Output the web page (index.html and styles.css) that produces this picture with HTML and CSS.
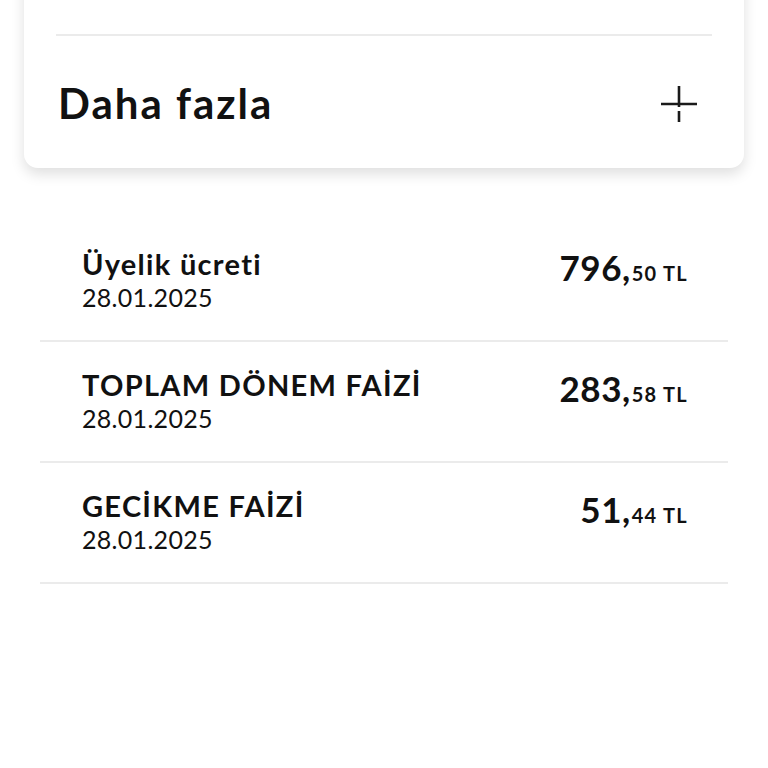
FILE: index.html
```html
<!DOCTYPE html>
<html lang="tr">
    <head>
        <meta charset="UTF-8">
        <meta name="viewport" content="width=device-width, initial-scale=1.0">
        <title>Hesap hareketleri</title>
        <link rel="stylesheet" href="styles.css">
    </head>
    <body>
        <div class="card">
            <div class="card-top"></div>
            <div class="more">
                <span class="more-label">Daha fazla</span>
                <svg class="plus" width="38" height="38" viewBox="0 0 38 38">
                    <path d="M1 19 H37" stroke="#1a1a1a" stroke-width="2.6"/>
                    <path d="M19 1 V22" stroke="#1a1a1a" stroke-width="2.6"/>
                    <path d="M19 26 V37" stroke="#1a1a1a" stroke-width="2.6"/>
                </svg>
            </div>
        </div>

        <ul class="moves">
            <li class="move">
                <div class="move-info">
                    <div class="move-title">Üyelik ücreti</div>
                    <div class="move-date">28.01.2025</div>
                </div>
                <div class="amount"><span class="amount-int">796,</span><span class="amount-dec">50 TL</span></div>
            </li>
            <li class="move">
                <div class="move-info">
                    <div class="move-title">TOPLAM DÖNEM FAİZİ</div>
                    <div class="move-date">28.01.2025</div>
                </div>
                <div class="amount"><span class="amount-int">283,</span><span class="amount-dec">58 TL</span></div>
            </li>
            <li class="move">
                <div class="move-info">
                    <div class="move-title">GECİKME FAİZİ</div>
                    <div class="move-date">28.01.2025</div>
                </div>
                <div class="amount"><span class="amount-int">51,</span><span class="amount-dec">44 TL</span></div>
            </li>
        </ul>
    </body>
</html>
```

FILE: styles.css
```css
body {
    margin: 0;
    background: #ffffff;
    color: #111111;
    font-family: Lato, "Noto Sans", sans-serif;
}

.card {
    margin: -30px 24px 0 24px;
    background: white;
    border-radius: 14px;
    box-shadow: 0px 6px 14px rgba(0, 0, 0, 0.13);
    padding: 0 32px;
}
.card-top {
    height: 64px;
    border-bottom: 2px solid #ebebeb;
}
.more {
    height: 132px;
    display: flex;
    align-items: center;
    justify-content: space-between;
}
.more-label {
    font-size: 42px;
    font-weight: 700;
    letter-spacing: 2px;
    padding-left: 2px;
    margin-top: 2px;
}
.plus {
    margin-right: 14px;
    margin-top: 4px;
}

.moves {
    list-style: none;
    margin: 53px 40px 0 40px;
    padding: 0;
}
.move {
    display: flex;
    justify-content: space-between;
    align-items: flex-start;
    height: 119px;
    padding: 0 40px 0 42px;
    border-bottom: 2px solid #ebebeb;
    box-sizing: content-box;
}
.move-info {
    padding-top: 26px;
}
.move-title {
    font-size: 29px;
    font-weight: 700;
    line-height: 34px;
    letter-spacing: 1.3px;
}
.move-date {
    font-size: 25px;
    line-height: 30px;
    letter-spacing: 0.3px;
    margin-top: 1px;
}
.amount {
    padding-top: 26px;
    font-weight: 700;
    line-height: 40px;
}
.amount-int {
    font-size: 35px;
    letter-spacing: 0.5px;
}
.amount-dec {
    font-size: 20px;
    letter-spacing: 1.3px;
    margin-left: 1px;
}
```
